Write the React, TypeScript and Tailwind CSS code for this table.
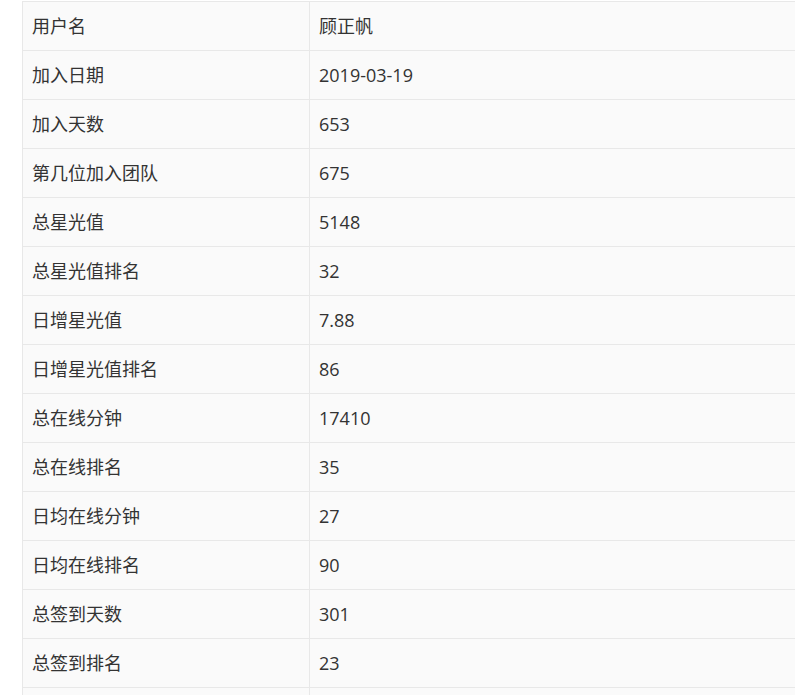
const rows: [string, string][] = [
  ['用户名', '顾正帆'],
  ['加入日期', '2019-03-19'],
  ['加入天数', '653'],
  ['第几位加入团队', '675'],
  ['总星光值', '5148'],
  ['总星光值排名', '32'],
  ['日增星光值', '7.88'],
  ['日增星光值排名', '86'],
  ['总在线分钟', '17410'],
  ['总在线排名', '35'],
  ['日均在线分钟', '27'],
  ['日均在线排名', '90'],
  ['总签到天数', '301'],
  ['总签到排名', '23'],
  ['', ''],
]

export default function App() {
  return (
    <div className="w-[795px] h-[695px] overflow-hidden bg-white pt-px pl-[22px] font-['Open_Sans','Noto_Sans_CJK_SC',sans-serif] text-[18px] text-[#333]">
      <div className="w-[800px] border-l border-t border-[#e8e8e8] bg-[#fafafa]">
        {rows.map(([label, value], i) => (
          <div key={i} className="flex h-[49px] border-b border-[#e8e8e8]">
            <div className="w-[287px] shrink-0 border-r border-[#e8e8e8] pl-[9px] flex items-center">
              {label}
            </div>
            <div className="flex-1 pl-[9px] flex items-center">{value}</div>
          </div>
        ))}
      </div>
    </div>
  )
}
